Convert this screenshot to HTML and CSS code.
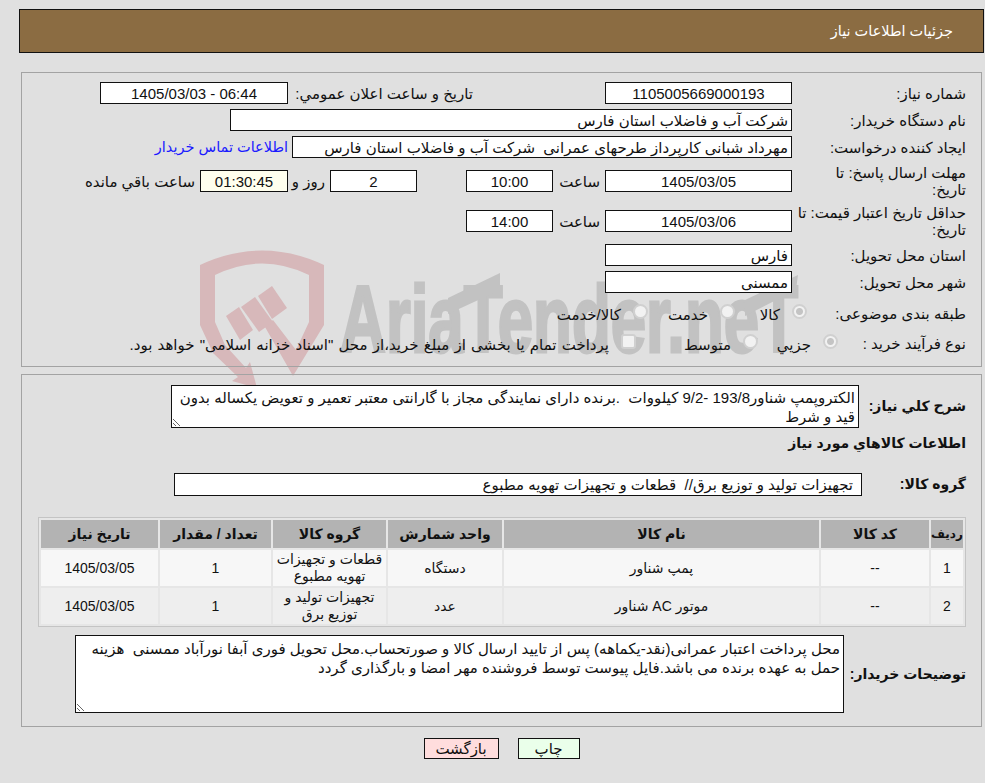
FILE: index.html
```html
<!DOCTYPE html>
<html lang="fa" dir="rtl">
<head>
    <meta charset="UTF-8">
    <title>جزئیات اطلاعات نیاز</title>
    <link rel="stylesheet" href="styles.css">
</head>
<body>
    <!-- واترمارک پشت محتوا -->
    <svg class="watermark" width="985" height="420" viewBox="0 0 985 420" aria-hidden="true">
        <g fill="#d7b8ba">
            <path fill-rule="evenodd" d="M200 265 Q262 236 324 265 L324 325 L293 376 L265 327 L273 320 L296 350 L309 322 L309 275 Q262 252 215 275 L215 322 L225 345 L246 368 L250 362 L257 388 L232 381 L238 377 L213 353 L200 325 Z"/>
            <polygon points="226,316 239,307 253,330 240,340"/>
            <polygon points="241,307 255,297 273,322 259,332"/>
            <polygon points="258,296 272,286 287,308 272,319"/>
        </g>
        <g fill="#c2c2c2">
            <text x="340" y="352" stroke="#c2c2c2" stroke-width="3" font-family="Liberation Sans, sans-serif" font-weight="700" font-size="95" textLength="458" lengthAdjust="spacingAndGlyphs" direction="ltr" unicode-bidi="bidi-override">AriaTender.neT</text>
            <polygon points="448,298 500,273 500,290 448,314"/>
            <polygon points="745,300 798,275 796,290 745,316"/>
        </g>
    </svg>

    <div class="page-title">جزئیات اطلاعات نیاز</div>

    <div class="box box-info">
        <div class="row">
            <div class="label label-main">شماره نیاز:</div>
            <div class="field field-date">1105005669000193</div>
            <div class="label label-announce">تاریخ و ساعت اعلان عمومي:</div>
            <div class="field field-announce">06:44 - 1405/03/03</div>
        </div>
        <div class="row">
            <div class="label label-main">نام دستگاه خریدار:</div>
            <div class="field field-text field-buyer">شرکت آب و فاضلاب استان فارس</div>
        </div>
        <div class="row">
            <div class="label label-main">ایجاد کننده درخواست:</div>
            <div class="field field-text field-creator">مهرداد شبانی کارپرداز طرحهای عمرانی&nbsp; شرکت آب و فاضلاب استان فارس</div>
            <a class="contact-link" href="#">اطلاعات تماس خریدار</a>
        </div>
        <div class="row row-tall">
            <div class="label label-main">مهلت ارسال پاسخ: تا<br>تاریخ:</div>
            <div class="field field-date">1405/03/05</div>
            <div class="label label-hour">ساعت</div>
            <div class="field field-small">10:00</div>
            <div class="field field-small field-days">2</div>
            <div class="label label-day">روز و</div>
            <div class="field field-timer">01:30:45</div>
            <div class="label label-left">ساعت باقي مانده</div>
        </div>
        <div class="row row-tall">
            <div class="label label-main">حداقل تاریخ اعتبار قیمت: تا<br>تاریخ:</div>
            <div class="field field-date">1405/03/06</div>
            <div class="label label-hour">ساعت</div>
            <div class="field field-small">14:00</div>
        </div>
        <div class="row">
            <div class="label label-main">استان محل تحویل:</div>
            <div class="field field-text field-date">فارس</div>
        </div>
        <div class="row">
            <div class="label label-main">شهر محل تحویل:</div>
            <div class="field field-text field-date">ممسنی</div>
        </div>
        <div class="row row-choice">
            <div class="label label-category">طبقه بندی موضوعی:</div>
            <label class="choice choice-goods"><input type="radio" name="category" checked disabled>کالا</label>
            <label class="choice choice-service"><input type="radio" name="category" disabled>خدمت</label>
            <label class="choice"><input type="radio" name="category" disabled>کالا/خدمت</label>
        </div>
        <div class="row row-process">
            <div class="label label-process">نوع فرآیند خرید :</div>
            <label class="choice choice-small"><input type="radio" name="process" checked disabled>جزیي</label>
            <label class="choice choice-medium"><input type="radio" name="process" disabled>متوسط</label>
            <label class="choice choice-note"><input class="check" type="checkbox" disabled>پرداخت تمام یا بخشی از مبلغ خرید،از محل "اسناد خزانه اسلامی" خواهد بود.</label>
        </div>
    </div>

    <div class="box box-goods">
        <div class="row row-desc">
            <div class="label label-strong label-desc">شرح کلي نیاز:</div>
            <textarea class="note note-desc" readonly>الکتروپمپ شناور193/8 -9/2 کیلووات  .برنده دارای نمایندگی مجاز با گارانتی معتبر تعمیر و تعویض یکساله بدون قید و شرط</textarea>
        </div>
        <div class="section-title">اطلاعات کالاهاي مورد نیاز</div>
        <div class="row row-group">
            <div class="label label-strong label-group">گروه کالا:</div>
            <div class="field field-text field-group">تجهیزات تولید و توزیع برق//&nbsp; قطعات و تجهیزات تهویه مطبوع</div>
        </div>

        <table class="goods-table">
            <colgroup>
                <col class="col-index"><col class="col-code"><col class="col-name"><col class="col-unit"><col class="col-cat"><col class="col-qty"><col class="col-date">
            </colgroup>
            <thead>
                <tr>
                    <th class="th-index">ردیف</th>
                    <th>کد کالا</th>
                    <th>نام کالا</th>
                    <th>واحد شمارش</th>
                    <th>گروه کالا</th>
                    <th>تعداد / مقدار</th>
                    <th>تاریخ نیاز</th>
                </tr>
            </thead>
            <tbody>
                <tr>
                    <td>1</td>
                    <td>--</td>
                    <td>پمپ شناور</td>
                    <td>دستگاه</td>
                    <td>قطعات و تجهیزات تهویه مطبوع</td>
                    <td>1</td>
                    <td>1405/03/05</td>
                </tr>
                <tr>
                    <td>2</td>
                    <td>--</td>
                    <td>موتور AC شناور</td>
                    <td>عدد</td>
                    <td>تجهیزات تولید و توزیع برق</td>
                    <td>1</td>
                    <td>1405/03/05</td>
                </tr>
            </tbody>
        </table>

        <div class="row row-buyer-note">
            <div class="label label-strong label-buyer-note">توضیحات خریدار:</div>
            <textarea class="note note-buyer" readonly>محل پرداخت اعتبار عمرانی(نقد-یکماهه) پس از تایید ارسال کالا و صورتحساب.محل تحویل فوری آبفا نورآباد ممسنی  هزینه حمل به عهده برنده می باشد.فایل پیوست توسط فروشنده مهر امضا و بارگذاری گردد</textarea>
        </div>
    </div>

    <div class="actions">
        <button class="btn btn-print" type="button">چاپ</button>
        <button class="btn btn-back" type="button">بازگشت</button>
    </div>
</body>
</html>
```

FILE: styles.css
```css
/* پایه */
body {
    margin: 0;
    background: #e0e0e0;
    color: #111;
    font-family: "Liberation Sans", "DejaVu Sans", sans-serif;
    font-size: 15px;
    line-height: 17px;
    position: relative;
    height: 783px;
    overflow: hidden;
}

.watermark {
    position: absolute;
    left: 0;
    top: 0;
}

.page-title {
    position: relative;
    box-sizing: border-box;
    height: 44px;
    margin: 9px 1px 0 19px;
    padding-right: 30px;
    background: #8b6c42;
    border: 1px solid #111;
    color: #fff;
    font-size: 14.5px;
    line-height: 42px;
}

/* کادرها */
.box {
    position: relative;
    box-sizing: border-box;
    margin: 0 3px 0 21px;
    padding-right: 15px;
    border: 1px solid #a3a3a3;
}

.box-info {
    height: 295px;
    margin-top: 19px;
    padding-top: 9px;
}

.box-goods {
    height: 353px;
    margin-top: 7px;
    padding-top: 10px;
}

.row {
    display: flex;
    align-items: center;
    min-height: 22px;
    margin-bottom: 5px;
}

.row-tall {
    height: 34px;
    margin: 6px 0;
}

.row-choice {
    margin-top: 9px;
    margin-bottom: 8px;
}

.row-process {
    margin-bottom: 0;
}

/* برچسب ها */
.label {
    flex: none;
    white-space: nowrap;
}

.label-main { width: 174px; }
.label-announce { width: 185px; margin-right: 132px; }
.label-hour { width: 47px; margin-right: 5px; }
.label-day { width: 33px; margin-right: 5px; margin-left: 4px; }
.label-left { margin-right: 5px; }
.label-category { width: 159px; }
.label-process { width: 128px; }

.label-strong {
    font-size: 14px;
    font-weight: bold;
}

.label-desc { width: 107px; }
.label-group { width: 104px; }
.label-buyer-note { width: 122px; }

/* فیلدها */
.field {
    flex: none;
    box-sizing: border-box;
    height: 22px;
    background: #fff;
    border: 1px solid #111;
    line-height: 22px;
    text-align: center;
}

.field-text {
    padding: 0 3px;
    line-height: 21px;
    text-align: right;
}

.field-date { width: 187px; }
.field-announce { width: 188px; }
.field-buyer { width: 562px; }
.field-creator { width: 500px; }
.field-small { width: 87px; }
.field-days { margin-right: 49px; }

.field-timer {
    width: 88px;
    background: #ffffee;
}

.field-group {
    width: 688px;
    height: 23px;
    padding-right: 8px;
}

.contact-link {
    margin-right: 4px;
    color: #1a1aff;
    font-size: 14.5px;
    text-decoration: none;
}

/* گزینه ها */
.choice {
    display: flex;
    align-items: center;
    flex: none;
    gap: 12px;
    padding-top: 2px;
}

.choice input {
    appearance: none;
    flex: none;
    box-sizing: border-box;
    width: 15px;
    height: 15px;
    margin: 0 0 5px;
    background: #f2f2f2;
    border: 2px solid #d0d0d0;
    border-radius: 50%;
}

.choice input:checked {
    background: radial-gradient(circle, #c4c4c4 0 3px, #f2f2f2 4px);
}

.choice input.check {
    border-radius: 3px;
}

.choice-goods { width: 72px; }
.choice-service { width: 87px; }
.choice-small { width: 80px; }
.choice-medium { width: 122px; }
.choice-note { word-spacing: 1px; }

/* متن های چندخطی */
.note {
    flex: none;
    box-sizing: border-box;
    margin: 0;
    padding: 2px 3px 1px;
    background: #fff;
    border: 1px solid #111;
    border-radius: 0;
    outline: none;
    overflow: hidden;
    color: #111;
    font-family: "Liberation Sans", "DejaVu Sans", sans-serif;
    font-size: 15px;
    line-height: 19px;
}

.note-desc {
    width: 688px;
    height: 43px;
}

.note-buyer {
    width: 769px;
    height: 78px;
    padding-top: 3px;
}

.row-desc {
    margin-bottom: 0;
}

.section-title {
    height: 20px;
    margin-top: 5px;
    font-size: 14px;
    font-weight: bold;
    line-height: 20px;
}

.row-group {
    margin-top: 20px;
    margin-bottom: 0;
}

.row-buyer-note {
    margin-top: 8px;
}

/* جدول */
.goods-table {
    width: 928px;
    margin-top: 21px;
    table-layout: fixed;
    border: 1px solid #c4c4c4;
    border-spacing: 2px;
    background: #e6e6e6;
    font-size: 14px;
    text-align: center;
}

.col-index { width: 32px; }
.col-code { width: 108px; }
.col-name { width: 315px; }
.col-unit { width: 114px; }
.col-cat { width: 113px; }
.col-qty { width: 111px; }
.col-date { width: 117px; }

.goods-table th {
    height: 28px;
    padding: 0;
    background: #b3b3b3;
    font-size: 14px;
}

.goods-table .th-index {
    font-size: 12px;
}

.goods-table td {
    height: 36px;
    padding: 0;
    background: #f7f7f7;
}

.goods-table tbody tr:nth-child(2) td {
    background: #eeeeee;
}

/* دکمه ها */
.actions {
    display: flex;
    justify-content: center;
    gap: 19px;
    margin: 11px 3px 0 21px;
    position: relative;
}

.btn {
    box-sizing: border-box;
    height: 21px;
    padding: 0;
    border: 1px solid #111;
    color: #111;
    font-family: "Liberation Sans", "DejaVu Sans", sans-serif;
    font-size: 15px;
    line-height: 19px;
}

.btn-print {
    width: 62px;
    background: #eaffea;
}

.btn-back {
    width: 75px;
    background: #ffdddd;
}
```
